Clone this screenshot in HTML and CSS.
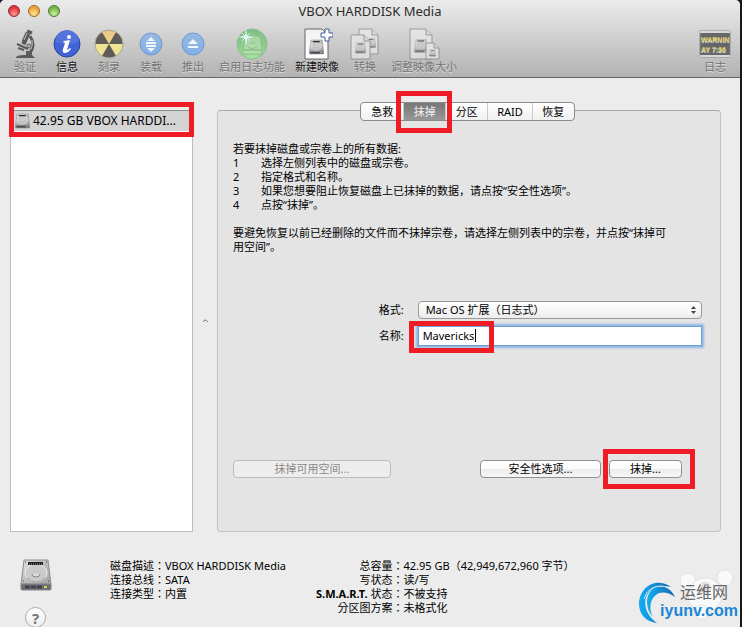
FILE: index.html
```html
<!DOCTYPE html>
<html lang="zh-CN">
<head>
    <meta charset="UTF-8">
    <meta name="viewport" content="width=device-width, initial-scale=1.0">
    <title>VBOX HARDDISK Media</title>
    <link rel="stylesheet" href="styles.css">
</head>
<body>
    <!-- Shared shapes -->
    <svg class="defs" width="0" height="0" aria-hidden="true">
        <defs>
            <linearGradient id="metal" x1="0" y1="0" x2="1" y2="1">
                <stop offset="0" stop-color="#e2e2e2"/>
                <stop offset="0.5" stop-color="#bdbdbd"/>
                <stop offset="1" stop-color="#a2a2a2"/>
            </linearGradient>
            <linearGradient id="paper" x1="0" y1="0" x2="0" y2="1">
                <stop offset="0" stop-color="#f2f2f2"/>
                <stop offset="1" stop-color="#ffffff"/>
            </linearGradient>
            <linearGradient id="yellow" x1="0" y1="0" x2="0" y2="1">
                <stop offset="0" stop-color="#ecc487"/>
                <stop offset="1" stop-color="#efe98c"/>
            </linearGradient>
            <linearGradient id="lightBlue" x1="0" y1="0" x2="0" y2="1">
                <stop offset="0" stop-color="#98b9e2"/>
                <stop offset="1" stop-color="#82b0e8"/>
            </linearGradient>
            <radialGradient id="green" cx="0.5" cy="0.9" r="0.9">
                <stop offset="0" stop-color="#a6e59c"/>
                <stop offset="1" stop-color="#7dbb83"/>
            </radialGradient>
            <linearGradient id="swirl" x1="0" y1="0" x2="1" y2="0">
                <stop offset="0" stop-color="#10aef2"/>
                <stop offset="1" stop-color="#1767ad"/>
            </linearGradient>
            <symbol id="disk" viewBox="0 0 32 32">
                <path d="M4 1h24l3 24H1z" fill="url(#metal)" stroke="#8c8c8c" stroke-width="1"/>
                <path d="M1 25h30v5q0 1-1 1H2q-1 0-1-1z" fill="#6b6b74" stroke="#88888c" stroke-width="1"/>
                <path d="M5 28h17" stroke="#42424c" stroke-width="3" stroke-dasharray="5 1"/>
                <path d="M24 28h3" stroke="#d8d84c" stroke-width="2"/>
                <ellipse cx="16" cy="14" rx="11" ry="9" fill="#cacaca" stroke="#ededed" stroke-width="1"/>
                <path d="M7 19q9 8 18 0" fill="none" stroke="#9b9b9b"/>
                <path d="M12 15q0 3 4 3t4-3" fill="#dedede" stroke="#858585"/>
                <path d="M8 3h15v3H8z" fill="#1c1c1c"/>
                <path d="M9 5h13" stroke="#aaa" stroke-width="1" stroke-dasharray="1 1"/>
                <path d="M5 3h1M26 3h1M3 22h1M28 22h1" stroke="#444"/>
            </symbol>
        </defs>
    </svg>

    <div class="window">
        <header class="header">
            <div class="titlebar">
                <div class="lights">
                    <button type="button" class="light light-red" aria-label="关闭"></button>
                    <button type="button" class="light light-yellow" aria-label="最小化"></button>
                    <button type="button" class="light light-green" aria-label="缩放"></button>
                </div>
                <h1 class="title">VBOX HARDDISK Media</h1>
            </div>
            <div class="toolbar">
                <button type="button" class="tool" disabled>
                    <svg class="tool-icon" viewBox="0 0 32 32">
                        <g fill="none" stroke="#5a5a5a">
                            <path d="M19 5l-4 9" stroke-width="5"/>
                            <path d="M18 3l5 2" stroke-width="3"/>
                            <path d="M13 14l4 2" stroke-width="3"/>
                            <path d="M21 8q6 9 0 17" stroke-width="3"/>
                            <path d="M8 16l11 5M9 20l6 2" stroke-width="2"/>
                            <path d="M20 23v5" stroke-width="6"/>
                        </g>
                        <path d="M7 29q2-2 8-2h8l3 3H7z" fill="#5a5a5a"/>
                        <path d="M18 5l-3 7M23 12q1 5-1 9" fill="none" stroke="#bdbdbd"/>
                        <circle cx="20" cy="18" r="2" fill="#b5b5b5" stroke="#5a5a5a"/>
                    </svg>
                    <span>验证</span>
                </button>
                <button type="button" class="tool">
                    <svg class="tool-icon" viewBox="0 0 32 32">
                        <circle cx="16" cy="16" r="13" fill="#4163d5" stroke="#2c429c" stroke-width="1"/>
                        <path d="M4 14a12 12 0 0 1 24 0q-12 4-24 0z" fill="#5472dc"/>
                        <circle cx="18" cy="9" r="2" fill="#fff"/>
                        <path d="M13 13l6-1-3 10q1 0 3-2l1 1q-3 4-6 4t-2-4l2-6-2-1z" fill="#fff"/>
                    </svg>
                    <span>信息</span>
                </button>
                <button type="button" class="tool" disabled>
                    <svg class="tool-icon" viewBox="0 0 32 32">
                        <circle cx="16" cy="16" r="14" fill="url(#yellow)"/>
                        <path d="M16 16L9 4a14 14 0 0 0-7 12zM16 16l7-12a14 14 0 0 1 7 12zM16 16L9 28a14 14 0 0 0 14 0z" fill="#5d5c58" transform="rotate(0 16 16)"/>
                        <path d="M16 16L9 28a14 14 0 0 0 14 0z" fill="url(#yellow)"/>
                        <path d="M2 16h14L9 28a14 14 0 0 1-7-12z" fill="#efe394"/>
                        <path d="M30 16H16l7 12a14 14 0 0 0 7-12z" fill="#efe394"/>
                        <path d="M16 16L9 28a14 14 0 0 0 14 0z" fill="#5d5c58"/>
                        <circle cx="16" cy="16" r="14" fill="none" stroke="#a8a698"/>
                    </svg>
                    <span>刻录</span>
                </button>
                <button type="button" class="tool" disabled>
                    <svg class="tool-icon" viewBox="0 0 32 32">
                        <circle cx="16" cy="16" r="11" fill="url(#lightBlue)" stroke="#6f98cf"/>
                        <path d="M12 13l4-4 4 4zM12 20l4 4 4-4zM11 14h10v2H11zM11 17h10v2H11z" fill="#f2f7fd"/>
                    </svg>
                    <span>装载</span>
                </button>
                <button type="button" class="tool" disabled>
                    <svg class="tool-icon" viewBox="0 0 32 32">
                        <circle cx="16" cy="16" r="11" fill="url(#lightBlue)" stroke="#6f98cf"/>
                        <path d="M11 16l5-5 5 5zM11 18h10v2H11z" fill="#f2f7fd"/>
                    </svg>
                    <span>推出</span>
                </button>
                <button type="button" class="tool" disabled>
                    <svg class="tool-icon" viewBox="0 0 32 32">
                        <circle cx="16" cy="16" r="15" fill="url(#green)" stroke="#8dbf90"/>
                        <path d="M9 8h15l2 14H7zM7 22h19v4H7z" fill="#c3e3bf" fill-opacity="0.5" stroke="#8fbb8f"/>
                        <path d="M11 18q5 5 11 0M14 15h5" fill="none" stroke="#8fbb8f"/>
                        <path d="M10 0l1 8 8 1-8 1-1 8-1-8-8-1 8-1z" fill="#e9fcff"/>
                        <path d="M6 5l8 8M14 5l-8 8" stroke="#d4f3f3"/>
                    </svg>
                    <span>启用日志功能</span>
                </button>
                <button type="button" class="tool">
                    <svg class="tool-icon" viewBox="0 0 32 32">
                        <path d="M4 1h17l6 6v24H4z" fill="url(#paper)" stroke="#666"/>
                        <use href="#disk" x="8" y="11" width="15" height="16"/>
                        <path d="M24 1h4v4h4v4h-4v4h-4V9h-4V5h4z" fill="#fff" stroke="#405f9e"/>
                    </svg>
                    <span>新建映像</span>
                </button>
                <button type="button" class="tool" disabled>
                    <svg class="tool-icon" viewBox="0 0 32 32">
                        <g opacity="0.6">
                            <path d="M10 1h13l6 6v19H10z" fill="#eee" stroke="#777"/>
                            <path d="M23 1v6h6" fill="#ddd" stroke="#777"/>
                            <use href="#disk" x="17" y="9" width="10" height="12"/>
                            <path d="M2 7h13l6 6v18H2z" fill="#eee" stroke="#777"/>
                            <path d="M15 7v6h6" fill="#ddd" stroke="#777"/>
                            <use href="#disk" x="6" y="14" width="11" height="12"/>
                        </g>
                    </svg>
                    <span>转换</span>
                </button>
                <button type="button" class="tool" disabled>
                    <svg class="tool-icon" viewBox="0 0 32 32">
                        <g opacity="0.6">
                            <path d="M2 1h16l6 6v24H2z" fill="#eee" stroke="#777"/>
                            <path d="M18 1v6h6" fill="#ddd" stroke="#777"/>
                            <use href="#disk" x="6" y="11" width="14" height="14"/>
                            <path d="M18 15h8l5 5v11H18z" fill="#f2f2f2" stroke="#777"/>
                            <path d="M26 15v5h5" fill="#ddd" stroke="#777"/>
                            <use href="#disk" x="21" y="21" width="7" height="8"/>
                        </g>
                    </svg>
                    <span>调整映像大小</span>
                </button>
                <button type="button" class="tool tool-last">
                    <svg class="tool-icon" viewBox="0 0 32 32">
                        <path d="M1 3h30v26H1z" fill="#66676a" stroke="#8b8b8b"/>
                        <path d="M1 4h30M1 28h30" stroke="#d8d8d8" stroke-width="2"/>
                        <g class="led">
                            <text x="2" y="14">WARNIN</text>
                            <text x="2" y="24">AY 7:36</text>
                        </g>
                    </svg>
                    <span>日志</span>
                </button>
            </div>
        </header>

        <main class="main">
            <div class="sidebar">
                <ul class="disk-list">
                    <li class="disk-item">
                        <svg class="disk-small"><use href="#disk"/></svg>
                        <span class="disk-name">42.95 GB VBOX HARDDI...</span>
                    </li>
                </ul>
                <span class="mark mark-disk"></span>
            </div>

            <div class="splitter">
                <svg width="5" height="4" viewBox="0 0 5 4"><path d="M0 3q2-4 5 0" fill="none" stroke="#777"/></svg>
            </div>

            <section class="panel">
                <div class="tabs" role="tablist">
                    <button type="button" class="tab" role="tab">急救</button>
                    <button type="button" class="tab tab-active" role="tab" aria-selected="true">抹掉</button>
                    <button type="button" class="tab" role="tab">分区</button>
                    <button type="button" class="tab" role="tab">RAID</button>
                    <button type="button" class="tab" role="tab">恢复</button>
                    <span class="mark mark-tab"></span>
                </div>

                <div class="help-text">
                    <p>若要抹掉磁盘或宗卷上的所有数据:</p>
                    <ol class="steps">
                        <li><span>1</span>选择左侧列表中的磁盘或宗卷。</li>
                        <li><span>2</span>指定格式和名称。</li>
                        <li><span>3</span>如果您想要阻止恢复磁盘上已抹掉的数据，请点按“安全性选项”。</li>
                        <li><span>4</span>点按“抹掉”。</li>
                    </ol>
                    <p>要避免恢复以前已经删除的文件而不抹掉宗卷，请选择左侧列表中的宗卷，并点按“抹掉可用空间”。</p>
                </div>

                <form class="form">
                    <label for="format">格式:</label>
                    <div class="field">
                        <select id="format" class="select">
                            <option>Mac OS 扩展（日志式）</option>
                        </select>
                        <svg class="select-arrows" viewBox="0 0 10 16"><path d="M0 6l5-6 5 6zM0 10l5 6 5-6z" fill="#444"/></svg>
                    </div>
                    <label for="name">名称:</label>
                    <div class="field">
                        <input type="text" id="name" class="input" value="Mavericks">
                        <span class="caret"></span>
                        <span class="mark mark-name"></span>
                    </div>
                </form>

                <div class="actions">
                    <button type="button" class="btn btn-wide" disabled>抹掉可用空间...</button>
                    <button type="button" class="btn btn-medium">安全性选项...</button>
                    <div class="field">
                        <button type="button" class="btn btn-small">抹掉...</button>
                        <span class="mark mark-erase"></span>
                    </div>
                </div>
            </section>
        </main>

        <footer class="footer">
            <div class="footer-icons">
                <svg class="disk-large"><use href="#disk"/></svg>
                <button type="button" class="help" aria-label="帮助">?</button>
            </div>
            <dl class="info">
                <dt lang="zh-TW">磁盘描述：</dt><dd>VBOX HARDDISK Media</dd>
                <dt lang="zh-TW">连接总线：</dt><dd>SATA</dd>
                <dt lang="zh-TW">连接类型：</dt><dd>内置</dd>
            </dl>
            <dl class="info">
                <dt lang="zh-TW">总容量：</dt><dd>42.95 GB（42,949,672,960 字节）</dd>
                <dt lang="zh-TW">写状态：</dt><dd>读/写</dd>
                <dt lang="zh-TW"><b>S.M.A.R.T.</b> 状态：</dt><dd>不被支持</dd>
                <dt lang="zh-TW">分区图方案：</dt><dd>未格式化</dd>
            </dl>
        </footer>
    </div>

    <div class="watermark">
        <svg class="watermark-art" viewBox="0 0 102 62">
            <g fill="#f9f9f9" stroke="#e2e2e2">
                <circle cx="49" cy="13" r="8"/>
                <circle cx="86" cy="10" r="8"/>
                <circle cx="66" cy="27" r="17"/>
                <circle cx="66" cy="20" r="6" fill="#e2e2e2"/>
                <circle cx="63" cy="44" r="7"/>
            </g>
            <path d="M32 19C16 8 0 20 0 36c0 10 7 18 18 19C-2 42 4 12 32 19z" fill="url(#swirl)"/>
            <path d="M36 29C28 12 8 17 8 34c0 6 2 11 6 15C6 34 18 16 36 29z" fill="url(#swirl)"/>
            <path d="M5 31q4-14 19-13" fill="none" stroke="#d5e9f5"/>
        </svg>
        <span class="watermark-name">运维网</span>
        <span class="watermark-site">iyunv.com</span>
    </div>
</body>
</html>
```

FILE: styles.css
```css
:root {
    --window: #ececec;
    --red: #ee1c25;
    --line: #c2c2c2;
}

* { box-sizing: border-box; }
body { margin: 0; padding-right: 2px; min-height: 100vh; overflow: hidden; position: relative; background: #16181b; color: #000; font: 11px/14px "Noto Sans", "Noto Sans CJK SC", sans-serif; }
button, input, select { font: inherit; color: inherit; margin: 0; }
ul, ol, dl, dd, p, h1 { margin: 0; padding: 0; }
ul, ol { list-style: none; }
svg { display: block; }
.defs { position: absolute; }

.window { min-height: 100vh; background: var(--window); border-radius: 5px 5px 0 0; overflow: hidden; }

/* Title bar and toolbar */
.header { height: 78px; background: linear-gradient(#ebebeb, #d2d2d2 45%, #b2b2b2); border-bottom: 1px solid #686868; }
.titlebar { height: 22px; display: grid; grid-template-columns: 1fr auto 1fr; align-items: center; padding: 0 8px; }
.lights { display: flex; gap: 8px; }
.light { width: 12px; height: 12px; padding: 0; border: 1px solid; border-radius: 50%; }
.light-red { background: radial-gradient(circle at 50% 80%, #ff9a94, #e0343c 65%); border-color: #8d2d30; }
.light-yellow { background: radial-gradient(circle at 50% 80%, #ffe690, #eda43a 65%); border-color: #94672a; }
.light-green { background: radial-gradient(circle at 50% 80%, #d2f2a0, #74b648 65%); border-color: #4b7635; }
.title { font-size: 13px; line-height: 20px; font-weight: normal; color: #2c2c2c; }
.toolbar { display: flex; gap: 10px; padding: 6px 9px 0; }
.tool { min-width: 32px; padding: 0; border: 0; background: none; display: flex; flex-direction: column; align-items: center; white-space: nowrap; color: #111; text-shadow: 0 1px 0 #ddd; }
.tool:disabled, .tool-last { color: #747474; }
.tool-last { margin-left: auto; }
.tool-icon { width: 32px; height: 32px; }
.led { font: bold 7px "Liberation Sans", sans-serif; fill: #d8c15d; }

/* Main area */
.main { display: flex; padding: 32px 19px 0 10px; }
.sidebar { position: relative; width: 183px; display: flex; }
.disk-list { flex: 1; background: #fff; border: 1px solid #bdbdbd; border-top-color: #8e8e8e; min-width: 0; }
.disk-item { display: flex; align-items: center; gap: 3px; height: 20px; padding: 0 0 0 4px; background: #d4d4d4; font-size: 12px; }
.disk-small { width: 15px; height: 16px; flex: none; }
.disk-name { white-space: nowrap; }
.splitter { width: 24px; display: flex; align-items: center; justify-content: center; }
.panel { flex: 1; background: #e4e4e4; border: 1px solid var(--line); border-top-color: #a8a8a8; border-radius: 4px; padding: 0 18px 53px 15px; }

.tabs { position: relative; display: flex; width: fit-content; height: 19px; margin: -9px auto 21px; border: 1px solid #8b8b8b; border-radius: 4px; background: linear-gradient(#fff, #f0f0f0); }
.tab { min-width: 42px; padding: 0 9px; border: 0; background: none; font-size: 11px; }
.tab + .tab { border-left: 1px solid #c8c8c8; }
.tab-active { background: linear-gradient(#777, #979797); color: #f4f4f4; }

.help-text p { margin-top: 14px; padding-right: 30px; }
.help-text p:first-child { margin: 0; }
.steps li { display: flex; }
.steps span { width: 28px; }

.form { display: grid; grid-template-columns: 3fr 5fr; gap: 7px 14px; align-items: center; margin-top: 47px; }
.form label { text-align: right; }
.field { position: relative; }
.select { appearance: none; display: block; width: 100%; height: 18px; padding: 0 7px; border: 1px solid #999; border-radius: 4px; background: linear-gradient(#fff, #ececec); }
.select-arrows { position: absolute; right: 6px; top: 5px; width: 5px; height: 8px; }
.input { display: block; width: 100%; height: 20px; padding: 0 4px 2px; border: 1px solid #6d9dd2; background: #fff; outline: none; box-shadow: 0 0 2px 2px #8db7e5; }
.caret { position: absolute; left: 57px; top: 3px; width: 1px; height: 13px; background: #000; }

.actions { display: flex; gap: 8px; margin-top: 114px; padding-right: 20px; }
.btn { display: block; height: 18px; padding: 0; border: 1px solid #909090; border-radius: 4px; background: linear-gradient(#fff, #fafafa 50%, #ededed 50%, #f6f6f6); line-height: 14px; }
.btn:disabled { color: #8a8a8a; border-color: #bcbcbc; background: #ededed; }
.btn-wide { width: 158px; margin-right: auto; }
.btn-medium { width: 121px; }
.btn-small { width: 73px; }

/* Red highlight frames */
.mark { position: absolute; border: 5px solid var(--red); pointer-events: none; }
.mark-disk { left: -1px; right: -1px; top: -8px; height: 35px; }
.mark-tab { left: 35px; top: -12px; width: 56px; height: 42px; }
.mark-name { left: -9px; top: -5px; width: 85px; height: 32px; }
.mark-erase { left: -6px; right: -13px; top: -11px; bottom: -11px; }

/* Disk details */
.footer { display: grid; grid-template-columns: 90px 206px auto; padding: 27px 20px 0; }
.footer-icons { display: flex; flex-direction: column; gap: 16px; height: 68px; }
.disk-large { flex: none; width: 32px; height: 32px; }
.help { flex: none; width: 21px; height: 21px; margin-left: 5px; padding: 0; border: 1px solid #aaa; border-radius: 50%; background: linear-gradient(#fff, #eee); color: #777; font-size: 15px; line-height: 18px; font-weight: bold; }
.info { display: grid; grid-template-columns: auto 1fr; grid-auto-rows: 14px; white-space: nowrap; }
.info dt { text-align: right; font-family: "Noto Sans", "Noto Sans CJK TC", sans-serif; }

.watermark { position: absolute; right: 4px; bottom: 0; width: 98px; height: 51px; }
.watermark-art { position: absolute; left: -1px; top: -8px; width: 102px; height: 62px; }
.watermark-name { position: absolute; right: 10px; top: 8px; font-size: 16px; line-height: 16px; color: #666; }
.watermark-site { position: absolute; right: 0; bottom: 8px; font: bold 16px/16px "Liberation Sans", sans-serif; color: #1b86d6; }
```
